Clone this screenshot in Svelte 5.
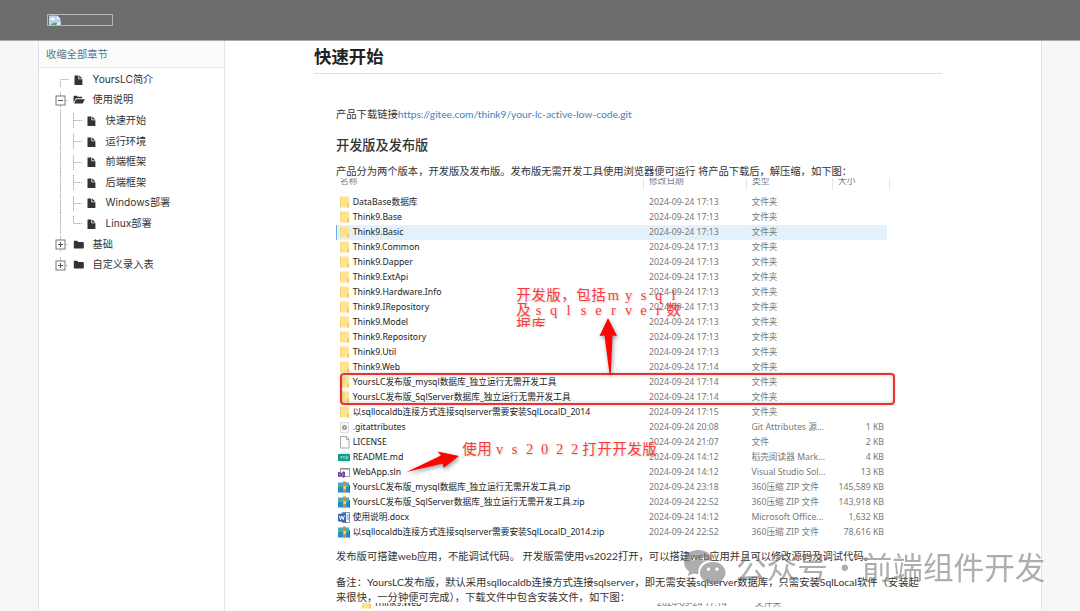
<script>
  const chapters = [
    { name: 'YoursLC简介', kind: 'doc', level: 0, line: 'first' },
    { name: '使用说明', kind: 'open', level: 0, toggle: '-' },
    { name: '快速开始', kind: 'doc', level: 1 },
    { name: '运行环境', kind: 'doc', level: 1 },
    { name: '前端框架', kind: 'doc', level: 1 },
    { name: '后端框架', kind: 'doc', level: 1 },
    { name: 'Windows部署', kind: 'doc', level: 1 },
    { name: 'Linux部署', kind: 'doc', level: 1, line: 'last' },
    { name: '基础', kind: 'closed', level: 0, toggle: '+' },
    { name: '自定义录入表', kind: 'closed', level: 0, toggle: '+', line: 'last' }
  ]

  const folder = (name, time = '17:13') => ({
    name,
    date: `2024-09-24 ${time}`,
    type: '文件夹',
    size: '',
    icon: 'folder'
  })
  const file = (name, time, type, size, icon) => ({
    name,
    date: `2024-09-24 ${time}`,
    type,
    size: `${size} KB`,
    icon
  })

  const files = [
    folder('DataBase数据库'),
    folder('Think9.Base'),
    folder('Think9.Basic'),
    folder('Think9.Common'),
    folder('Think9.Dapper'),
    folder('Think9.ExtApi'),
    folder('Think9.Hardware.Info'),
    folder('Think9.IRepository'),
    folder('Think9.Model'),
    folder('Think9.Repository'),
    folder('Think9.Util'),
    folder('Think9.Web', '17:14'),
    folder('YoursLC发布版_mysql数据库_独立运行无需开发工具', '17:14'),
    folder('YoursLC发布版_SqlServer数据库_独立运行无需开发工具', '17:14'),
    folder('以sqllocaldb连接方式连接sqlserver需要安装SqlLocalD_2014', '17:15'),
    file('.gitattributes', '20:08', 'Git Attributes 源...', '1', 'gear'),
    file('LICENSE', '21:07', '文件', '2', 'blank'),
    file('README.md', '14:12', '稻壳阅读器 Mark...', '4', 'md'),
    file('WebApp.sln', '14:12', 'Visual Studio Sol...', '13', 'sln'),
    file('YoursLC发布版_mysql数据库_独立运行无需开发工具.zip', '23:18', '360压缩 ZIP 文件', '145,589', 'zip'),
    file('YoursLC发布版_SqlServer数据库_独立运行无需开发工具.zip', '22:52', '360压缩 ZIP 文件', '143,918', 'zip'),
    file('使用说明.docx', '14:12', 'Microsoft Office...', '1,632', 'word'),
    file('以sqllocaldb连接方式连接sqlserver需要安装SqlLocalD_2014.zip', '22:52', '360压缩 ZIP 文件', '78,616', 'zip')
  ]

  const devNote = ['开发版，包括mysql', '及sqlserver数', '据库']
  const vsNote = ['使用vs2022打开开发版']
</script>

{#snippet treeIcon(kind)}
  <svg class="tree-icon" width="12" height="12" viewBox="0 0 12 12">
    {#if kind === 'doc'}
      <path d="M1.500 1.500h3.900v3.700h4v5.900H1.500z M6.200 1.500l3.200 3H6.200z" />
    {:else if kind === 'open'}
      <path d="M.6 8.700V2.500q0-.8.8-.8h2.400l1 1h3.700q.7 0 .7.8v.8H3.600q-.7 0-1.100.6z M3.700 5.200h7.800q.4 0 .1.500L9.900 9q-.3.600-1 .6H1.200l1.600-3.900q.2-.5.9-.5z" />
    {:else}
      <path d="M.8 2.600q0-.8.8-.8h2.600l1.100 1.100h4.600q.9 0 .9.900v4.900q0 .8-.9.800H1.600q-.8 0-.8-.8z" />
    {/if}
  </svg>
{/snippet}

{#snippet fileIcon(kind)}
  <svg class="file-icon" width="14" height="13" viewBox="0 0 14 13">
    {#if kind === 'folder'}
      <path d="M2 .5h9v11H2z" fill="#ffe38f" />
      <path d="M2 .5h1v11H2z" fill="#f5d680" />
      <path d="M9.500 7.500h1.500v4H9.500z" fill="#eec45c" />
    {:else if kind === 'gear'}
      <path d="M2.500 1.500h8v10h-8z" fill="#f8f8f8" stroke="#ddd" />
      <circle cx="6.500" cy="6.500" r="1.700" fill="#fff" stroke="#6d7885" stroke-width="1.300" />
    {:else if kind === 'blank'}
      <path d="M2.500 .5h6l2.500 2.500v9h-8.500z M8.500 .5v3H11" fill="#fcfcfc" stroke="#aaa" />
    {:else if kind === 'md'}
      <path d="M3 1h8v11H3z" fill="#dceee9" />
      <path d="M0 3h12v7H0z" fill="#139b86" />
      <path d="M3 8V5l1.500 1.500L6 5v3M8 5v3q2 0 2-1.500T8 5" fill="none" stroke="#b5e3da" stroke-width=".8" />
    {:else if kind === 'sln'}
      <path d="M2.500 2.500h9v8h-9z" fill="#fff" stroke="#999" />
      <path d="M2 2h10v1.600H2z" fill="#8c8c9c" />
      <path d="M0 6.200l1.300-.5L3 7.200l2.400-2 1.600.8v5l-1.600.8L3 9.800l-1.700 1.500L0 10.800z" fill="#7a3fa8" />
      <path d="M1.200 7.500v2l1-1z M5.200 7.200v2.600L3.900 8.500z" fill="#d9c2ec" />
    {:else if kind === 'zip'}
      <path d="M0 1.500h11v4H0z" fill="#45a5dc" />
      <path d="M0 4h12v3H0z" fill="#53b76b" />
      <path d="M0 6h12v5.500H0z" fill="#258ccf" />
      <path d="M5 .5h3v11H5z" fill="#d78b35" />
      <path d="M5.500 5h2.500v3h-2.500z" fill="#f6d26a" />
      <path d="M11 4h1v7.500h-1z" fill="#1b6caf" />
    {:else}
      <path d="M4.500 1.500h7v10h-7z" fill="#fff" stroke="#6f8fc0" />
      <path d="M8.500 4h2.500M8.500 6h2.500M8.500 8h2.500" stroke="#7795c8" />
      <path d="M0 3l8-1.200v9.700L0 10.300z" fill="#3b69b2" />
      <path d="M1.500 4.800l1 3.800 1.400-3.400 1.300 3.400L6.400 4.600" fill="none" stroke="#fff" />
    {/if}
  </svg>
{/snippet}

{#snippet note(lines)}
  {#each lines as line}
    <div class="note-line">
      {#each [...line] as ch}<span>{ch}</span>{/each}
    </div>
  {/each}
{/snippet}

<header>
  <div class="logo">
    <svg width="12" height="10" viewBox="0 0 12 10">
      <path d="M0 .5h8L11.500 4v6H0z" fill="#bcd0f4" />
      <path d="M1 5q0-1.500 1.500-1.300Q3 2 4.700 2.700 6 3 5.800 5z" fill="#fff" />
      <path d="M8 .5V4h3.500z" fill="#eef3fb" />
      <path d="M2 10q3-4 6-1.500V10z" fill="#4fae35" />
      <path d="M7 10l4.500-4v4z" fill="#e8edf5" />
    </svg>
  </div>
</header>

<div class="page">
  <aside>
    <div class="collapse">收缩全部章节</div>
    <ul>
      {#each chapters as c}
        <li class:child={c.level === 1}>
          <svg class="branch" width="34" height="21" viewBox="0 0 34 21">
            <g class="dots">
              {#if c.level === 1}
                <path d="M4.500 0V21" />
                <path d={c.line === 'last' ? 'M17.500 3V10.500' : 'M17.500 3V18'} />
                <path d="M18 10.500H26" />
              {:else if c.toggle}
                <path d={c.line === 'last' ? 'M4.500 2V6' : 'M4.500 2V18'} />
                <path d="M10 10.500H12" />
              {:else}
                <path d="M4.500 18V10.500H13" />
              {/if}
            </g>
            {#if c.toggle}
              <rect x="0" y="6" width="9" height="9" fill="#fff" stroke="#777" />
              <path d={c.toggle === '+' ? 'M2 10.500h5M4.500 8v5' : 'M2 10.500h5'} stroke="#555" />
            {/if}
          </svg>
          {@render treeIcon(c.kind)}
          <span>{c.name}</span>
        </li>
      {/each}
    </ul>
  </aside>

  <main>
    <h1>快速开始</h1>
    <article>
      <p class="download">产品下载链接<a href="https://gitee.com/think9/your-lc-active-low-code.git">https://gitee.com/think9/your-lc-active-low-code.git</a></p>
      <h2>开发版及发布版</h2>
      <p class="intro">产品分为两个版本，开发版及发布版。发布版无需开发工具使用浏览器便可运行 将产品下载后，解压缩，如下图：</p>

      <div class="explorer">
        <div class="columns">
          <span>名称</span><span>修改日期</span><span>类型</span><span>大小</span>
        </div>
        {#each files as f, i}
          <div class="row" class:selected={i === 2}>
            {@render fileIcon(f.icon)}
            <span class="name">{f.name}</span>
            <span class="date">{f.date}</span>
            <span class="type">{f.type}</span>
            <span class="size">{f.size}</span>
          </div>
        {/each}

        <div class="frame"></div>
        <svg class="arrows" width="560" height="363" viewBox="0 0 560 363">
          <path d="M272 140l9 18-4.500-.5L274.800 196h-1.300L268.500 157.500l-5 .5z" />
          <path d="M70.500 294L105 277.500l-3.500-4L123 278l-15.500 12-.5-4.500z" />
        </svg>
        <div class="note dev">{@render note(devNote)}</div>
        <div class="note vs">{@render note(vsNote)}</div>
      </div>

      <p class="after">发布版可搭建web应用，不能调试代码。 开发版需使用vs2022打开，可以搭建web应用并且可以修改源码及调试代码。</p>
      <p class="remark">备注：YoursLC发布版，默认采用sqllocaldb连接方式连接sqlserver，即无需安装sqlserver数据库，只需安装SqlLocal软件（安装起<br />来很快，一分钟便可完成），下载文件中包含安装文件，如下图：</p>

      <div class="explorer next">
        <div class="row">
          {@render fileIcon('folder')}
          <span class="name">Think9.Web</span>
          <span class="date">2024-09-24 17:14</span>
          <span class="type">文件夹</span>
        </div>
      </div>
    </article>
  </main>
</div>

<div class="watermark">
  <svg width="44" height="38" viewBox="0 0 44 38">
    <path fill-rule="evenodd" d="M15.500 1C6.500 1 1 6.500 1 13c0 4 2 7.200 5.200 9.500L4.800 27l5.400-2.600q2.600.8 5.300.7C14 17 20 11 29.500 11 28 4.500 22.500 1 15.500 1zM10.500 7.500a2 2 0 1 1 0 4 2 2 0 0 1 0-4zm10 0a2 2 0 1 1 0 4 2 2 0 0 1 0-4z" />
    <path fill-rule="evenodd" d="M30 13c-7.500 0-13 4.600-13 10.700S22.500 34.500 30 34.500q2.300 0 4.500-.7l4 2.200-1-3.700c3-2.200 5-5 5-8.600C42.500 17.600 37 13 30 13zM25.500 18.500a1.700 1.700 0 1 1 0 3.400 1.700 1.700 0 0 1 0-3.400zm8.500 0a1.700 1.700 0 1 1 0 3.400 1.700 1.700 0 0 1 0-3.400z" />
  </svg>
  <span>公众号</span><span class="dot">·</span><span>前端组件开发</span>
</div>

<style>
  :global(body) {
    background: #f7f7f7;
    overflow: hidden;
  }

  :global(#app) {
    height: 611px;
    overflow: hidden;
    font-family: Lato, 'Noto Sans CJK SC', sans-serif;
    font-size: 10.3px;
    color: #333;
  }

  header {
    box-sizing: border-box;
    height: 41px;
    padding: 14px 47px;
    background: #6d6d6d;
    border-bottom: 1px solid #a9a9a9;
  }

  .logo {
    box-sizing: border-box;
    width: 66px;
    height: 12px;
    padding-left: 1px;
    border: 1px solid #b5b5b5;
  }

  .logo svg {
    display: block;
  }

  .page {
    display: flex;
    box-sizing: border-box;
    width: 1004px;
    height: 570px;
    margin-left: 38px;
    background: #fff;
    border: solid #dde3e6;
    border-width: 0 1px;
  }

  aside {
    flex: none;
    width: 185px;
    border-right: 1px solid #e1e7eb;
  }

  .collapse {
    height: 26px;
    padding-left: 7px;
    line-height: 26px;
    color: #4d7588;
    background: #fbfbfb;
    border-bottom: 1px solid #e1e7eb;
  }

  ul {
    list-style: none;
    margin: 0;
    padding: 1.500px 0 0 17px;
  }

  li {
    display: flex;
    align-items: center;
    height: 20.600px;
  }

  .branch {
    flex: none;
    width: 34px;
    margin-right: -17px;
    overflow: visible;
  }

  .child .branch {
    margin-right: -4px;
  }

  .dots path {
    fill: none;
    stroke: #aaa;
    stroke-dasharray: 1.500 0.800;
  }

  .tree-icon {
    flex: none;
    margin-right: 7.500px;
    fill: #333;
  }

  li span {
    font-family: Inter, 'Noto Sans CJK SC', sans-serif;
    font-size: 10.200px;
    line-height: 16px;
    padding-bottom: 2px;
    white-space: nowrap;
  }

  main {
    width: 628px;
    padding-left: 89px;
  }

  h1 {
    box-sizing: border-box;
    height: 33px;
    margin: 0;
    font-size: 17.400px;
    line-height: 32px;
    font-weight: 700;
    color: #222;
    border-bottom: 1px solid #ddd;
  }

  article {
    padding-left: 22px;
  }

  p,
  h2 {
    margin: 0;
    white-space: nowrap;
  }

  .download {
    padding-top: 33px;
    line-height: 15px;
  }

  a {
    color: #4183c4;
    text-decoration: none;
    letter-spacing: -0.045px;
  }

  h2 {
    margin-top: 13px;
    font-size: 13.200px;
    line-height: 20px;
    font-weight: 500;
  }

  .intro {
    height: 15px;
    margin-top: 8px;
    line-height: 16px;
    letter-spacing: -0.030px;
  }

  .explorer {
    position: relative;
    width: 560px;
    height: 363px;
    overflow: hidden;
    font-family: 'Noto Sans', 'Noto Sans CJK SC', sans-serif;
    font-size: 8.700px;
  }

  .columns {
    display: grid;
    grid-template-columns: 308px 103px 86px 57px;
    height: 12px;
    margin-bottom: 4.500px;
    line-height: 6px;
    color: #6f7d95;
  }

  .columns span {
    padding-left: 5px;
    border-right: 1px solid #e6e6e6;
  }

  .columns span:first-child {
    padding-left: 4px;
  }

  .row {
    display: grid;
    grid-template-columns: 14.700px 296.300px 102.500px 80px 52.500px;
    align-items: center;
    width: 551px;
    height: 15px;
    padding-left: 2px;
    box-sizing: border-box;
    line-height: 15px;
    white-space: nowrap;
    color: #777;
  }

  .selected {
    background: #e3f1fd;
    box-shadow: inset 1px 0 #70ace4;
  }

  .file-icon {
    display: block;
  }

  .name {
    color: #222;
  }

  .size {
    text-align: right;
  }

  .frame {
    position: absolute;
    box-sizing: border-box;
    left: 4px;
    top: 195px;
    width: 555px;
    height: 32px;
    border: 2px solid #f03030;
    border-radius: 4px;
    box-shadow: 0 0 3px rgba(0, 0, 0, 0.2), inset 0 0 4px rgba(0, 0, 0, 0.2);
  }

  .arrows {
    position: absolute;
    left: 0;
    top: 0;
    fill: #fe0404;
    filter: drop-shadow(1px 2px 2px rgba(0, 0, 0, 0.4));
  }

  .note {
    position: absolute;
    overflow: hidden;
    font-family: 'Liberation Serif', 'Noto Sans CJK SC', serif;
    font-size: 14.500px;
    color: #fb3c3c;
    text-shadow: 1px 1px 2px rgba(0, 0, 0, 0.2);
  }

  .dev {
    left: 180px;
    top: 110px;
    height: 39px;
  }

  .vs {
    left: 126px;
    top: 264px;
  }

  .note-line {
    display: grid;
    grid-auto-flow: column;
    grid-auto-columns: 15px;
    justify-content: start;
    height: 15px;
    line-height: 15px;
    text-align: center;
  }

  .after {
    margin-top: 8px;
    line-height: 15px;
  }

  .remark {
    height: 30px;
    margin-top: 11px;
    line-height: 15px;
    letter-spacing: 0.025px;
  }

  .after + .remark {
    margin-bottom: -2px;
  }

  .next {
    box-sizing: border-box;
    height: 7px;
    padding-left: 22px;
  }

  .next .row {
    grid-template-columns: 14px 283px 98px 80px;
    margin-top: -7px;
  }

  .watermark {
    position: absolute;
    left: 683px;
    top: 546px;
    display: flex;
    align-items: center;
    height: 44px;
    font-family: 'Noto Sans CJK SC', sans-serif;
    font-size: 30.600px;
    font-weight: 400;
    line-height: 40px;
    white-space: nowrap;
    color: #777;
    opacity: 0.600;
  }

  .watermark span {
    padding-bottom: 4px;
  }

  .watermark svg {
    margin-right: 9px;
    fill: #777;
  }

  .watermark .dot {
    width: 34px;
    text-align: center;
  }
</style>
